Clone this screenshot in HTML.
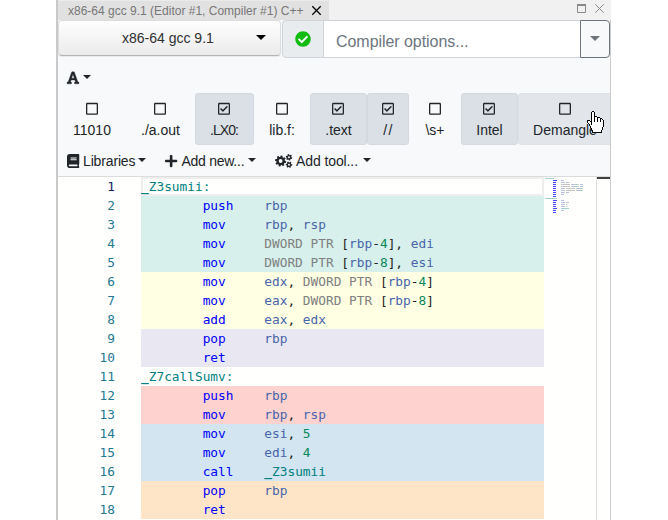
<!DOCTYPE html>
<html lang="en">
<head>
<meta charset="utf-8">
<title>x86-64 gcc 9.1 (Editor #1, Compiler #1) C++</title>
<style>
html,body{margin:0;padding:0;background:#fff;}
body{width:668px;height:520px;overflow:hidden;position:relative;font-family:"Liberation Sans",sans-serif;font-size:14px;color:#212529;}
svg{display:block;overflow:visible;}
#pane{position:absolute;left:58px;top:0;width:553px;height:520px;overflow:hidden;background:#fff;}
#bl{position:absolute;left:56px;top:0;width:2px;height:520px;background:#c9c9c9;}
#br{position:absolute;left:552px;top:20px;width:1px;height:500px;background:#ccc;}
#hdr{position:absolute;left:0;top:0;width:553px;height:20px;background:#f1f1f1;}
#tab{position:absolute;left:0;top:0;height:20px;width:270.5px;background:#e1e1e1;border-top:1px solid #ebebeb;color:#777;font-size:12px;line-height:20px;overflow:hidden;white-space:nowrap;box-sizing:border-box;padding-left:10px;}
#tabx{position:absolute;left:254px;top:6px;}
#max{position:absolute;left:519px;top:4px;}
#cls{position:absolute;left:537px;top:4px;}
#top{position:absolute;left:0;top:20px;width:552px;height:156px;background:#f8f9fa;border-bottom:1px solid #dcdcdc;}
#picker{position:absolute;left:0px;top:0;width:223px;height:36px;box-sizing:border-box;border:1px solid #dcdcdc;border-bottom-color:#b4b4b4;border-radius:4px;background:linear-gradient(#fefefe,#ebebeb);box-shadow:0 1px 0 rgba(0,0,0,.06);font-size:14px;color:#303030;}
#picker span{position:absolute;left:63px;top:0;line-height:34px;white-space:nowrap;}
#picker i{position:absolute;left:197px;top:14px;border:5px solid transparent;border-top:5px solid #000;border-bottom:0;}
#status{position:absolute;left:224px;top:0;width:42px;height:38px;box-sizing:border-box;border:1px solid #ced4da;border-radius:4px 0 0 4px;background:#e9ecef;}
#status svg{position:absolute;left:12px;top:10px;}
#opts{position:absolute;left:265px;top:0;width:258px;height:38px;box-sizing:border-box;border:1px solid #ced4da;border-right:0;background:#fff;color:#6c757d;font-size:16px;line-height:41px;padding-left:12px;letter-spacing:-0.05px;white-space:nowrap;overflow:hidden;}
#dd{position:absolute;left:522px;top:0;width:30px;height:38px;box-sizing:border-box;border:1px solid #6c757d;border-radius:0 4px 4px 0;background:#f8f9fa;}
#dd i{position:absolute;left:9px;top:15px;border:5px solid transparent;border-top:5px solid #6c757d;border-bottom:0;}
.caret{position:absolute;border:4px solid transparent;border-top:4px solid #212529;border-bottom:0;}
#fonta{position:absolute;left:9.2px;top:51px;}
.fbtn{position:absolute;top:73px;height:52px;box-sizing:border-box;border:1px solid transparent;border-radius:3px;text-align:center;font-size:14px;color:#212529;}
.fbtn.on{background:#dae0e5;border-color:#d3d9df;}
.fbtn.hov{background:#e2e6ea;border-color:#dfe3e7;}
.fbtn svg{position:absolute;left:50%;margin-left:-6.5px;top:8px;}
.fbtn span{position:absolute;left:0;right:0;top:26px;line-height:21px;white-space:nowrap;}
.tb{position:absolute;top:131px;line-height:21px;white-space:nowrap;}
.ico{position:absolute;}
#ed{position:absolute;left:0;top:177px;width:552px;height:343px;background:#fffffe;overflow:hidden;}
.ln{position:absolute;left:0;width:552px;height:19px;}
.no{position:absolute;left:0;top:0;width:57px;text-align:right;color:#237893;font:12.8px/19px "DejaVu Sans Mono","Liberation Mono",monospace;}
.no.cur{color:#0b216f;}
.cd{position:absolute;left:83px;top:0;width:403px;height:19px;margin:0;font:12.8px/19px "DejaVu Sans Mono","Liberation Mono",monospace;color:#000;white-space:pre;overflow:hidden;}
.c0{background:#d7f0eb}.c1{background:#ffffe4}.c2{background:#e8e7f2}.c3{background:#fed2ce}.c4{background:#d2e5f0}.c5{background:#fee5c8}
.lb{color:#008080}.op{color:#0000ff}.rg{color:#4864aa}.kw{color:#808080}.nm{color:#09885a}.pu{color:#222}
#curln{position:absolute;left:83px;top:0;width:403px;height:19px;box-sizing:border-box;border:2px solid #eee;}
#mm{position:absolute;left:486.5px;top:0.3px;width:52px;height:343px;}
#mm i{position:absolute;height:1px;display:block;}
#ov{position:absolute;left:538px;top:0;width:13px;height:343px;border-left:1px solid #ddd;}
#ov b{position:absolute;left:0;top:0;width:13px;height:2px;background:#424242;}
#cursor{position:absolute;left:587px;top:111px;}
</style>
</head>
<body>
<div id="bl"></div>
<div id="pane">
 <div id="hdr">
  <div id="tab">x86-64 gcc 9.1 (Editor #1, Compiler #1) C++</div>
  <svg id="tabx" width="9" height="9" viewBox="0 0 9 9"><path d="M0.3 0.3L8.7 8.7M8.7 0.3L0.3 8.7" stroke="#000" stroke-width="1.3" fill="none"/></svg>
  <svg id="max" width="9" height="9" viewBox="0 0 9 9"><path d="M0.5 1V8.5H8.5V1" stroke="#888" stroke-width="1" fill="none"/><rect x="0" y="0" width="9" height="2" fill="#888"/></svg>
  <svg id="cls" width="9" height="9" viewBox="0 0 9 9"><path d="M0.3 0.3L8.7 8.7M8.7 0.3L0.3 8.7" stroke="#888" stroke-width="1" fill="none"/></svg>
 </div>
 <div id="top">
  <div id="picker"><span>x86-64 gcc 9.1</span><i></i></div>
  <div id="status"><svg width="16" height="16" viewBox="0 0 512 512"><circle cx="256" cy="256" r="200" fill="#fff"/><path fill="#12bb12" d="M504 256c0 136.967-111.033 248-248 248S8 392.967 8 256 119.033 8 256 8s248 111.033 248 248zM227.314 387.314l184-184c6.248-6.248 6.248-16.379 0-22.627l-22.627-22.627c-6.248-6.249-16.379-6.249-22.628 0L216 308.118l-70.059-70.059c-6.248-6.248-16.379-6.248-22.628 0l-22.627 22.627c-6.248 6.248-6.248 16.379 0 22.627l104 104c6.249 6.249 16.379 6.249 22.628.001z"/></svg></div>
  <div id="opts">Compiler options...</div>
  <div id="dd"><i></i></div>

  <svg id="fonta" width="12" height="13.7" viewBox="0 0 448 512"><path fill="#212529" stroke="#212529" stroke-width="14" d="M152 416h-24.013l26.586-80.782H292.8L319.386 416H296c-8.837 0-16 7.163-16 16v32c0 8.837 7.163 16 16 16h136c8.837 0 16-7.163 16-16v-32c0-8.837-7.163-16-16-16h-26.739L275.495 42.746A16 16 0 0 0 260.382 32h-72.766a16 16 0 0 0-15.113 10.746L42.739 416H16c-8.837 0-16 7.163-16 16v32c0 8.837 7.163 16 16 16h136c8.837 0 16-7.163 16-16v-32c0-8.837-7.163-16-16-16zm64.353-271.778c4.348-15.216 6.61-28.156 7.586-34.644.839 6.521 2.939 19.476 7.727 34.706l41.335 124.006h-98.619l41.971-124.068z"/></svg>
  <i class="caret" style="left:25px;top:55px"></i>

  <div class="fbtn" style="left:0px;width:68px"><svg width="12" height="13.7" viewBox="0 0 448 512"><path fill="#212529" d="M400 32H48C21.500 32 0 53.500 0 80v352c0 26.500 21.500 48 48 48h352c26.500 0 48-21.500 48-48V80c0-26.500-21.500-48-48-48zm-6 400H54c-3.300 0-6-2.700-6-6V86c0-3.300 2.700-6 6-6h340c3.300 0 6 2.700 6 6v340c0 3.300-2.700 6-6 6z"/></svg><span>11010</span></div>
  <div class="fbtn" style="left:68px;width:69px"><svg width="12" height="13.7" viewBox="0 0 448 512"><path fill="#212529" d="M400 32H48C21.500 32 0 53.500 0 80v352c0 26.500 21.500 48 48 48h352c26.500 0 48-21.500 48-48V80c0-26.500-21.500-48-48-48zm-6 400H54c-3.300 0-6-2.700-6-6V86c0-3.300 2.700-6 6-6h340c3.300 0 6 2.700 6 6v340c0 3.300-2.700 6-6 6z"/></svg><span>./a.out</span></div>
  <div class="fbtn on" style="left:137px;width:59px"><svg width="12" height="13.7" viewBox="0 0 448 512"><path fill="#212529" d="M400 32H48C21.490 32 0 53.490 0 80v352c0 26.510 21.490 48 48 48h352c26.510 0 48-21.490 48-48V80c0-26.510-21.490-48-48-48zm0 400H48V80h352v352zm-35.864-241.724L191.547 361.480c-4.705 4.667-12.303 4.637-16.970-.068l-90.781-91.516c-4.667-4.705-4.637-12.303.069-16.971l22.719-22.536c4.705-4.667 12.303-4.637 16.970.069l59.792 60.277 141.352-140.216c4.705-4.667 12.303-4.637 16.970.068l22.536 22.718c4.667 4.706 4.637 12.304-.068 16.971z"/></svg><span style="letter-spacing:-0.9px;left:-1px">.LX0:</span></div>
  <div class="fbtn" style="left:196px;width:56px"><svg width="12" height="13.7" viewBox="0 0 448 512"><path fill="#212529" d="M400 32H48C21.500 32 0 53.500 0 80v352c0 26.500 21.500 48 48 48h352c26.500 0 48-21.500 48-48V80c0-26.500-21.500-48-48-48zm-6 400H54c-3.300 0-6-2.700-6-6V86c0-3.300 2.700-6 6-6h340c3.300 0 6 2.700 6 6v340c0 3.300-2.700 6-6 6z"/></svg><span>lib.f:</span></div>
  <div class="fbtn on" style="left:252px;width:57px"><svg width="12" height="13.7" viewBox="0 0 448 512"><path fill="#212529" d="M400 32H48C21.490 32 0 53.490 0 80v352c0 26.510 21.490 48 48 48h352c26.510 0 48-21.490 48-48V80c0-26.510-21.490-48-48-48zm0 400H48V80h352v352zm-35.864-241.724L191.547 361.480c-4.705 4.667-12.303 4.637-16.970-.068l-90.781-91.516c-4.667-4.705-4.637-12.303.069-16.971l22.719-22.536c4.705-4.667 12.303-4.637 16.970.069l59.792 60.277 141.352-140.216c4.705-4.667 12.303-4.637 16.970.068l22.536 22.718c4.667 4.706 4.637 12.304-.068 16.971z"/></svg><span>.text</span></div>
  <div class="fbtn on" style="left:309px;width:42px"><svg width="12" height="13.7" viewBox="0 0 448 512"><path fill="#212529" d="M400 32H48C21.490 32 0 53.490 0 80v352c0 26.510 21.490 48 48 48h352c26.510 0 48-21.490 48-48V80c0-26.510-21.490-48-48-48zm0 400H48V80h352v352zm-35.864-241.724L191.547 361.480c-4.705 4.667-12.303 4.637-16.970-.068l-90.781-91.516c-4.667-4.705-4.637-12.303.069-16.971l22.719-22.536c4.705-4.667 12.303-4.637 16.970.069l59.792 60.277 141.352-140.216c4.705-4.667 12.303-4.637 16.970.068l22.536 22.718c4.667 4.706 4.637 12.304-.068 16.971z"/></svg><span style="letter-spacing:1.3px;left:1px">//</span></div>
  <div class="fbtn" style="left:351px;width:52px"><svg width="12" height="13.7" viewBox="0 0 448 512"><path fill="#212529" d="M400 32H48C21.500 32 0 53.500 0 80v352c0 26.500 21.500 48 48 48h352c26.500 0 48-21.500 48-48V80c0-26.500-21.500-48-48-48zm-6 400H54c-3.300 0-6-2.700-6-6V86c0-3.300 2.700-6 6-6h340c3.300 0 6 2.700 6 6v340c0 3.300-2.700 6-6 6z"/></svg><span>\s+</span></div>
  <div class="fbtn on" style="left:403px;width:57px"><svg width="12" height="13.7" viewBox="0 0 448 512"><path fill="#212529" d="M400 32H48C21.490 32 0 53.490 0 80v352c0 26.510 21.490 48 48 48h352c26.510 0 48-21.490 48-48V80c0-26.510-21.490-48-48-48zm0 400H48V80h352v352zm-35.864-241.724L191.547 361.480c-4.705 4.667-12.303 4.637-16.970-.068l-90.781-91.516c-4.667-4.705-4.637-12.303.069-16.971l22.719-22.536c4.705-4.667 12.303-4.637 16.970.069l59.792 60.277 141.352-140.216c4.705-4.667 12.303-4.637 16.970.068l22.536 22.718c4.667 4.706 4.637 12.304-.068 16.971z"/></svg><span>Intel</span></div>
  <div class="fbtn hov" style="left:460px;width:94px"><svg width="12" height="13.7" viewBox="0 0 448 512"><path fill="#212529" d="M400 32H48C21.500 32 0 53.500 0 80v352c0 26.500 21.500 48 48 48h352c26.500 0 48-21.500 48-48V80c0-26.500-21.500-48-48-48zm-6 400H54c-3.300 0-6-2.700-6-6V86c0-3.300 2.700-6 6-6h340c3.300 0 6 2.700 6 6v340c0 3.300-2.700 6-6 6z"/></svg><span>Demangle</span></div>

  <svg class="ico" style="left:9px;top:134px" width="12.25" height="14" viewBox="0 0 448 512"><path fill="#212529" d="M448 360V24c0-13.300-10.700-24-24-24H96C43 0 0 43 0 96v320c0 53 43 96 96 96h328c13.300 0 24-10.700 24-24v-16c0-7.500-3.500-14.300-8.900-18.700-4.200-15.400-4.200-59.300 0-74.700 5.400-4.300 8.900-11.100 8.900-18.600zM128 134c0-3.300 2.700-6 6-6h212c3.300 0 6 2.700 6 6v20c0 3.300-2.700 6-6 6H134c-3.300 0-6-2.700-6-6v-20zm0 64c0-3.300 2.700-6 6-6h212c3.300 0 6 2.700 6 6v20c0 3.300-2.700 6-6 6H134c-3.300 0-6-2.700-6-6v-20zm253.400 250H96c-17.700 0-32-14.300-32-32 0-17.600 14.400-32 32-32h285.400c-1.900 17.100-1.900 46.900 0 64z"/></svg>
  <div class="tb" style="left:25px;letter-spacing:-0.15px">Libraries</div>
  <i class="caret" style="left:80px;top:138px"></i>

  <svg class="ico" style="left:107px;top:134px" width="12.25" height="14" viewBox="0 0 448 512"><path fill="#212529" d="M416 208H272V64c0-17.670-14.330-32-32-32h-32c-17.670 0-32 14.330-32 32v144H32c-17.670 0-32 14.330-32 32v32c0 17.670 14.330 32 32 32h144v144c0 17.670 14.330 32 32 32h32c17.670 0 32-14.330 32-32V304h144c17.670 0 32-14.330 32-32v-32c0-17.670-14.330-32-32-32z"/></svg>
  <div class="tb" style="left:123.4px;letter-spacing:-0.25px">Add new...</div>
  <i class="caret" style="left:190px;top:138px"></i>

  <svg class="ico" style="left:217px;top:134px" width="17.5" height="14" viewBox="0 0 17.5 14"><path fill="#212529" fill-rule="evenodd" d="M11.20 7.15 L10.82 9.04 L9.47 8.88 L8.79 9.88 L9.45 11.07 L7.85 12.13 L7.01 11.06 L5.82 11.29 L5.45 12.60 L3.56 12.22 L3.72 10.87 L2.72 10.19 L1.53 10.85 L0.47 9.25 L1.54 8.41 L1.31 7.22 L0.00 6.85 L0.38 4.96 L1.73 5.12 L2.41 4.12 L1.75 2.93 L3.35 1.87 L4.19 2.94 L5.38 2.71 L5.75 1.40 L7.64 1.78 L7.48 3.13 L8.48 3.81 L9.67 3.15 L10.73 4.75 L9.66 5.59 L9.89 6.78Z M3.70 7.00 a1.90 1.90 0 1 0 3.80 0 a1.90 1.90 0 1 0 -3.80 0Z M17.29 3.53 L16.85 4.97 L15.93 4.72 L15.27 5.34 L15.45 6.27 L13.98 6.60 L13.73 5.69 L12.87 5.42 L12.16 6.04 L11.13 4.93 L11.80 4.26 L11.60 3.38 L10.71 3.07 L11.15 1.63 L12.07 1.88 L12.73 1.26 L12.55 0.33 L14.02 0.00 L14.27 0.91 L15.13 1.18 L15.84 0.56 L16.87 1.67 L16.20 2.34 L16.40 3.22Z M13.00 3.30 a1.00 1.00 0 1 0 2.00 0 a1.00 1.00 0 1 0 -2.00 0Z M17.27 10.27 L17.12 11.77 L16.18 11.71 L15.65 12.44 L16.01 13.32 L14.63 13.94 L14.21 13.09 L13.32 13.00 L12.74 13.75 L11.51 12.87 L12.04 12.08 L11.67 11.26 L10.73 11.13 L10.88 9.63 L11.82 9.69 L12.35 8.96 L11.99 8.08 L13.37 7.46 L13.79 8.31 L14.68 8.40 L15.26 7.65 L16.49 8.53 L15.96 9.32 L16.33 10.14Z M13.00 10.70 a1.00 1.00 0 1 0 2.00 0 a1.00 1.00 0 1 0 -2.00 0Z"/></svg>
  <div class="tb" style="left:238px;letter-spacing:-0.1px">Add tool...</div>
  <i class="caret" style="left:305px;top:138px"></i>
 </div>
 <div id="br"></div>
 <div id="ed">
  <div id="curln"></div>
<div class="ln" style="top:0px"><span class="no cur">1</span><pre class="cd"><span class="lb"><b>_</b>Z3sumii:</span></pre></div>
<div class="ln" style="top:19px"><span class="no">2</span><pre class="cd c0">        <span class="op">push</span>    <span class="rg">rbp</span></pre></div>
<div class="ln" style="top:38px"><span class="no">3</span><pre class="cd c0">        <span class="op">mov</span>     <span class="rg">rbp</span><span class="pu">,</span> <span class="rg">rsp</span></pre></div>
<div class="ln" style="top:57px"><span class="no">4</span><pre class="cd c0">        <span class="op">mov</span>     <span class="kw">DWORD PTR</span> <span class="pu">[</span><span class="rg">rbp</span><span class="pu">-</span><span class="nm">4</span><span class="pu">]</span><span class="pu">,</span> <span class="rg">edi</span></pre></div>
<div class="ln" style="top:76px"><span class="no">5</span><pre class="cd c0">        <span class="op">mov</span>     <span class="kw">DWORD PTR</span> <span class="pu">[</span><span class="rg">rbp</span><span class="pu">-</span><span class="nm">8</span><span class="pu">]</span><span class="pu">,</span> <span class="rg">esi</span></pre></div>
<div class="ln" style="top:95px"><span class="no">6</span><pre class="cd c1">        <span class="op">mov</span>     <span class="rg">edx</span><span class="pu">,</span> <span class="kw">DWORD PTR</span> <span class="pu">[</span><span class="rg">rbp</span><span class="pu">-</span><span class="nm">4</span><span class="pu">]</span></pre></div>
<div class="ln" style="top:114px"><span class="no">7</span><pre class="cd c1">        <span class="op">mov</span>     <span class="rg">eax</span><span class="pu">,</span> <span class="kw">DWORD PTR</span> <span class="pu">[</span><span class="rg">rbp</span><span class="pu">-</span><span class="nm">8</span><span class="pu">]</span></pre></div>
<div class="ln" style="top:133px"><span class="no">8</span><pre class="cd c1">        <span class="op">add</span>     <span class="rg">eax</span><span class="pu">,</span> <span class="rg">edx</span></pre></div>
<div class="ln" style="top:152px"><span class="no">9</span><pre class="cd c2">        <span class="op">pop</span>     <span class="rg">rbp</span></pre></div>
<div class="ln" style="top:171px"><span class="no">10</span><pre class="cd c2">        <span class="op">ret</span></pre></div>
<div class="ln" style="top:190px"><span class="no">11</span><pre class="cd"><span class="lb"><b>_</b>Z7callSumv:</span></pre></div>
<div class="ln" style="top:209px"><span class="no">12</span><pre class="cd c3">        <span class="op">push</span>    <span class="rg">rbp</span></pre></div>
<div class="ln" style="top:228px"><span class="no">13</span><pre class="cd c3">        <span class="op">mov</span>     <span class="rg">rbp</span><span class="pu">,</span> <span class="rg">rsp</span></pre></div>
<div class="ln" style="top:247px"><span class="no">14</span><pre class="cd c4">        <span class="op">mov</span>     <span class="rg">esi</span><span class="pu">,</span> <span class="nm">5</span></pre></div>
<div class="ln" style="top:266px"><span class="no">15</span><pre class="cd c4">        <span class="op">mov</span>     <span class="rg">edi</span><span class="pu">,</span> <span class="nm">4</span></pre></div>
<div class="ln" style="top:285px"><span class="no">16</span><pre class="cd c4">        <span class="op">call</span>    <span class="lb"><b>_</b>Z3sumii</span></pre></div>
<div class="ln" style="top:304px"><span class="no">17</span><pre class="cd c5">        <span class="op">pop</span>     <span class="rg">rbp</span></pre></div>
<div class="ln" style="top:323px"><span class="no">18</span><pre class="cd c5">        <span class="op">ret</span></pre></div>

  <div id="mm"><i style="left:0px;top:1px;width:9px;background:#9fd0d0"></i><i style="left:8px;top:3px;width:4px;background:#4848ff"></i><i style="left:16px;top:3px;width:3px;background:#b4bee0"></i><i style="left:8px;top:5px;width:3px;background:#4848ff"></i><i style="left:16px;top:5px;width:3px;background:#b4bee0"></i><i style="left:19px;top:5px;width:1px;background:#c8c8c8"></i><i style="left:21px;top:5px;width:3px;background:#b4bee0"></i><i style="left:8px;top:7px;width:3px;background:#4848ff"></i><i style="left:16px;top:7px;width:9px;background:#c4c4c4"></i><i style="left:26px;top:7px;width:1px;background:#c8c8c8"></i><i style="left:27px;top:7px;width:3px;background:#b4bee0"></i><i style="left:30px;top:7px;width:1px;background:#c8c8c8"></i><i style="left:31px;top:7px;width:1px;background:#9fd6c0"></i><i style="left:32px;top:7px;width:1px;background:#c8c8c8"></i><i style="left:33px;top:7px;width:1px;background:#c8c8c8"></i><i style="left:35px;top:7px;width:3px;background:#b4bee0"></i><i style="left:8px;top:9px;width:3px;background:#4848ff"></i><i style="left:16px;top:9px;width:9px;background:#c4c4c4"></i><i style="left:26px;top:9px;width:1px;background:#c8c8c8"></i><i style="left:27px;top:9px;width:3px;background:#b4bee0"></i><i style="left:30px;top:9px;width:1px;background:#c8c8c8"></i><i style="left:31px;top:9px;width:1px;background:#9fd6c0"></i><i style="left:32px;top:9px;width:1px;background:#c8c8c8"></i><i style="left:33px;top:9px;width:1px;background:#c8c8c8"></i><i style="left:35px;top:9px;width:3px;background:#b4bee0"></i><i style="left:8px;top:11px;width:3px;background:#4848ff"></i><i style="left:16px;top:11px;width:3px;background:#b4bee0"></i><i style="left:19px;top:11px;width:1px;background:#c8c8c8"></i><i style="left:21px;top:11px;width:9px;background:#c4c4c4"></i><i style="left:31px;top:11px;width:1px;background:#c8c8c8"></i><i style="left:32px;top:11px;width:3px;background:#b4bee0"></i><i style="left:35px;top:11px;width:1px;background:#c8c8c8"></i><i style="left:36px;top:11px;width:1px;background:#9fd6c0"></i><i style="left:37px;top:11px;width:1px;background:#c8c8c8"></i><i style="left:8px;top:13px;width:3px;background:#4848ff"></i><i style="left:16px;top:13px;width:3px;background:#b4bee0"></i><i style="left:19px;top:13px;width:1px;background:#c8c8c8"></i><i style="left:21px;top:13px;width:9px;background:#c4c4c4"></i><i style="left:31px;top:13px;width:1px;background:#c8c8c8"></i><i style="left:32px;top:13px;width:3px;background:#b4bee0"></i><i style="left:35px;top:13px;width:1px;background:#c8c8c8"></i><i style="left:36px;top:13px;width:1px;background:#9fd6c0"></i><i style="left:37px;top:13px;width:1px;background:#c8c8c8"></i><i style="left:8px;top:15px;width:3px;background:#4848ff"></i><i style="left:16px;top:15px;width:3px;background:#b4bee0"></i><i style="left:19px;top:15px;width:1px;background:#c8c8c8"></i><i style="left:21px;top:15px;width:3px;background:#b4bee0"></i><i style="left:8px;top:17px;width:3px;background:#4848ff"></i><i style="left:16px;top:17px;width:3px;background:#b4bee0"></i><i style="left:8px;top:19px;width:3px;background:#4848ff"></i><i style="left:0px;top:21px;width:12px;background:#9fd0d0"></i><i style="left:8px;top:23px;width:4px;background:#4848ff"></i><i style="left:16px;top:23px;width:3px;background:#b4bee0"></i><i style="left:8px;top:25px;width:3px;background:#4848ff"></i><i style="left:16px;top:25px;width:3px;background:#b4bee0"></i><i style="left:19px;top:25px;width:1px;background:#c8c8c8"></i><i style="left:21px;top:25px;width:3px;background:#b4bee0"></i><i style="left:8px;top:27px;width:3px;background:#4848ff"></i><i style="left:16px;top:27px;width:3px;background:#b4bee0"></i><i style="left:19px;top:27px;width:1px;background:#c8c8c8"></i><i style="left:21px;top:27px;width:1px;background:#9fd6c0"></i><i style="left:8px;top:29px;width:3px;background:#4848ff"></i><i style="left:16px;top:29px;width:3px;background:#b4bee0"></i><i style="left:19px;top:29px;width:1px;background:#c8c8c8"></i><i style="left:21px;top:29px;width:1px;background:#9fd6c0"></i><i style="left:8px;top:31px;width:4px;background:#4848ff"></i><i style="left:16px;top:31px;width:8px;background:#9fd0d0"></i><i style="left:8px;top:33px;width:3px;background:#4848ff"></i><i style="left:16px;top:33px;width:3px;background:#b4bee0"></i><i style="left:8px;top:35px;width:3px;background:#4848ff"></i></div>
  <div id="ov"><b></b></div>
 </div>
</div>
<svg id="cursor" width="17" height="22" viewBox="0 0 17 22" shape-rendering="crispEdges"><path fill="#fff" d="M5 1h2v1h-2zM5 2h2v1h-2zM5 3h2v1h-2zM5 4h2v1h-2zM5 5h2v1h-2zM5 6h2v1h-2zM8 6h2v1h-2zM5 7h2v1h-2zM8 7h2v1h-2zM11 7h2v1h-2zM5 8h2v1h-2zM8 8h2v1h-2zM11 8h2v1h-2zM14 8h1v1h-1zM5 9h2v1h-2zM8 9h2v1h-2zM11 9h2v1h-2zM14 9h2v1h-2zM1 10h2v1h-2zM5 10h2v1h-2zM8 10h2v1h-2zM11 10h2v1h-2zM14 10h2v1h-2zM1 11h3v1h-3zM5 11h11v1h-11zM2 12h2v1h-2zM5 12h11v1h-11zM3 13h1v1h-1zM5 13h11v1h-11zM3 14h13v1h-13zM4 15h12v1h-12zM4 16h11v1h-11zM5 17h10v1h-10zM5 18h10v1h-10zM6 19h8v1h-8zM6 20h8v1h-8z"/><path fill="#000" d="M5 0h2v1h-2zM4 1h1v1h-1zM7 1h1v1h-1zM4 2h1v1h-1zM7 2h1v1h-1zM4 3h1v1h-1zM7 3h1v1h-1zM4 4h1v1h-1zM7 4h1v1h-1zM4 5h1v1h-1zM7 5h3v1h-3zM4 6h1v1h-1zM7 6h1v1h-1zM10 6h3v1h-3zM4 7h1v1h-1zM7 7h1v1h-1zM10 7h1v1h-1zM13 7h2v1h-2zM4 8h1v1h-1zM7 8h1v1h-1zM10 8h1v1h-1zM13 8h1v1h-1zM15 8h1v1h-1zM0 9h3v1h-3zM4 9h1v1h-1zM7 9h1v1h-1zM10 9h1v1h-1zM13 9h1v1h-1zM16 9h1v1h-1zM0 10h1v1h-1zM3 10h2v1h-2zM7 10h1v1h-1zM10 10h1v1h-1zM13 10h1v1h-1zM16 10h1v1h-1zM0 11h1v1h-1zM4 11h1v1h-1zM16 11h1v1h-1zM1 12h1v1h-1zM4 12h1v1h-1zM16 12h1v1h-1zM2 13h1v1h-1zM4 13h1v1h-1zM16 13h1v1h-1zM2 14h1v1h-1zM16 14h1v1h-1zM3 15h1v1h-1zM16 15h1v1h-1zM3 16h1v1h-1zM15 16h1v1h-1zM4 17h1v1h-1zM15 17h1v1h-1zM4 18h1v1h-1zM15 18h1v1h-1zM5 19h1v1h-1zM14 19h1v1h-1zM5 20h1v1h-1zM14 20h1v1h-1zM5 21h10v1h-10z"/></svg>
</body>
</html>
